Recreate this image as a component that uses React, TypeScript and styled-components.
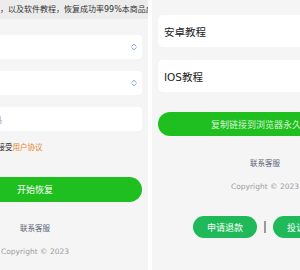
import styled, { createGlobalStyle } from "styled-components";

const GlobalStyle = createGlobalStyle`
body {
  margin: 0;
  background: #ffffff;
  font-family: "DejaVu Sans", "Noto Sans CJK SC", sans-serif;
}
`;

const Stage = styled.div`
display: flex;
justify-content: center;
gap: 4px;
width: 300px;
height: 270px;
overflow: hidden;
`;

const Panel = styled.div`
flex: 0 0 226px;
width: 226px;
min-width: 0;
display: flex;
flex-direction: column;
background: #f5f5f5;
overflow: hidden;
`;

const Notice = styled.div`
height: 19px;
padding: 0 6px;
line-height: 19px;
font-size: 8px;
color: #333;
white-space: nowrap;
overflow: hidden;
background: #ececec;
`;

const Body = styled.div`
display: flex;
flex-direction: column;
padding: 0 6px;
`;

const Form = styled.div`
display: flex;
flex-direction: column;
gap: 12px;
margin-top: 16px;
`;

const Field = styled.div`
display: flex;
align-items: center;
justify-content: space-between;
height: 24px;
padding: 0 5px 0 2px;
border-radius: 4px;
background: #fff;
font-size: 8px;
color: #9a9a9a;
white-space: nowrap;
`;

const Agreement = styled.div`
margin-top: 12px;
padding-left: 32px;
line-height: 10px;
font-size: 7.5px;
color: #333;
white-space: nowrap;
`;

const Link = styled.span`
color: #e8842c;
`;

const GreenButton = styled.div<{ $top: number; $height: number; $faded?: boolean }>`
display: flex;
align-items: center;
justify-content: center;
margin-top: ${({ $top }) => $top}px;
height: ${({ $height }) => $height}px;
border-radius: 13px;
background: #1fbf1f;
font-size: 9px;
color: ${({ $faded }) => ($faded ? "rgba(255,255,255,0.82)" : "#fff")};
white-space: nowrap;
overflow: hidden;
`;

const Service = styled.div<{ $top: number }>`
margin-top: ${({ $top }) => $top}px;
text-align: center;
line-height: 10px;
font-size: 7.5px;
color: #5d6475;
`;

const Copyright = styled.div`
margin-top: 13px;
text-align: center;
line-height: 10px;
font-size: 7.5px;
color: #9c9c9c;
white-space: nowrap;
`;

const Tutorial = styled.div<{ $top: number }>`
display: flex;
align-items: center;
margin-top: ${({ $top }) => $top}px;
height: 32px;
padding-left: 6px;
border-radius: 5px;
background: #fff;
font-size: 10.5px;
color: #222;
`;

const Actions = styled.div`
display: flex;
align-items: center;
justify-content: center;
margin-top: 24px;
`;

const Pill = styled.div`
display: flex;
align-items: center;
justify-content: center;
width: 64px;
height: 22px;
border-radius: 11px;
background: #20b95a;
font-size: 9px;
color: #fff;
`;

const Divider = styled.span`
width: 2px;
height: 12px;
margin: 0 7px;
background: #9a9a9a;
`;

const SortIcon = () => (
  <svg width="6" height="8" viewBox="0 0 6 8" fill="none" stroke="#6b9fd6" strokeWidth="1" strokeLinecap="round" strokeLinejoin="round">
    <path d="M1 3.2 L3 1.2 L5 3.2" />
    <path d="M1 4.8 L3 6.8 L5 4.8" />
  </svg>
);

const App = () => (
  <>
    <GlobalStyle />
    <Stage>
      <Panel>
        <Notice>专业恢复聊天记录等，以及软件教程，恢复成功率99%本商品虚拟产品</Notice>
        <Body>
          <Form>
            <Field>
              <span>请选择恢复类型</span>
              <SortIcon />
            </Field>
            <Field>
              <span>请选择手机系统</span>
              <SortIcon />
            </Field>
            <Field>
              <span>请输入您的订单号码</span>
            </Field>
          </Form>
          <Agreement>
            我已阅读并接受<Link>用户协议</Link>
          </Agreement>
          <GreenButton $top={24} $height={25}>开始恢复</GreenButton>
          <Service $top={22}>联系客服</Service>
          <Copyright>Copyright © 2023</Copyright>
        </Body>
      </Panel>
      <Panel>
        <Body>
          <Tutorial $top={15}>安卓教程</Tutorial>
          <Tutorial $top={13}>IOS教程</Tutorial>
          <GreenButton $top={20} $height={24} $faded>复制链接到浏览器永久保存</GreenButton>
          <Service $top={23}>联系客服</Service>
          <Copyright>Copyright © 2023</Copyright>
          <Actions>
            <Pill>申请退款</Pill>
            <Divider />
            <Pill>投诉商家</Pill>
          </Actions>
        </Body>
      </Panel>
    </Stage>
  </>
);

export default App;
